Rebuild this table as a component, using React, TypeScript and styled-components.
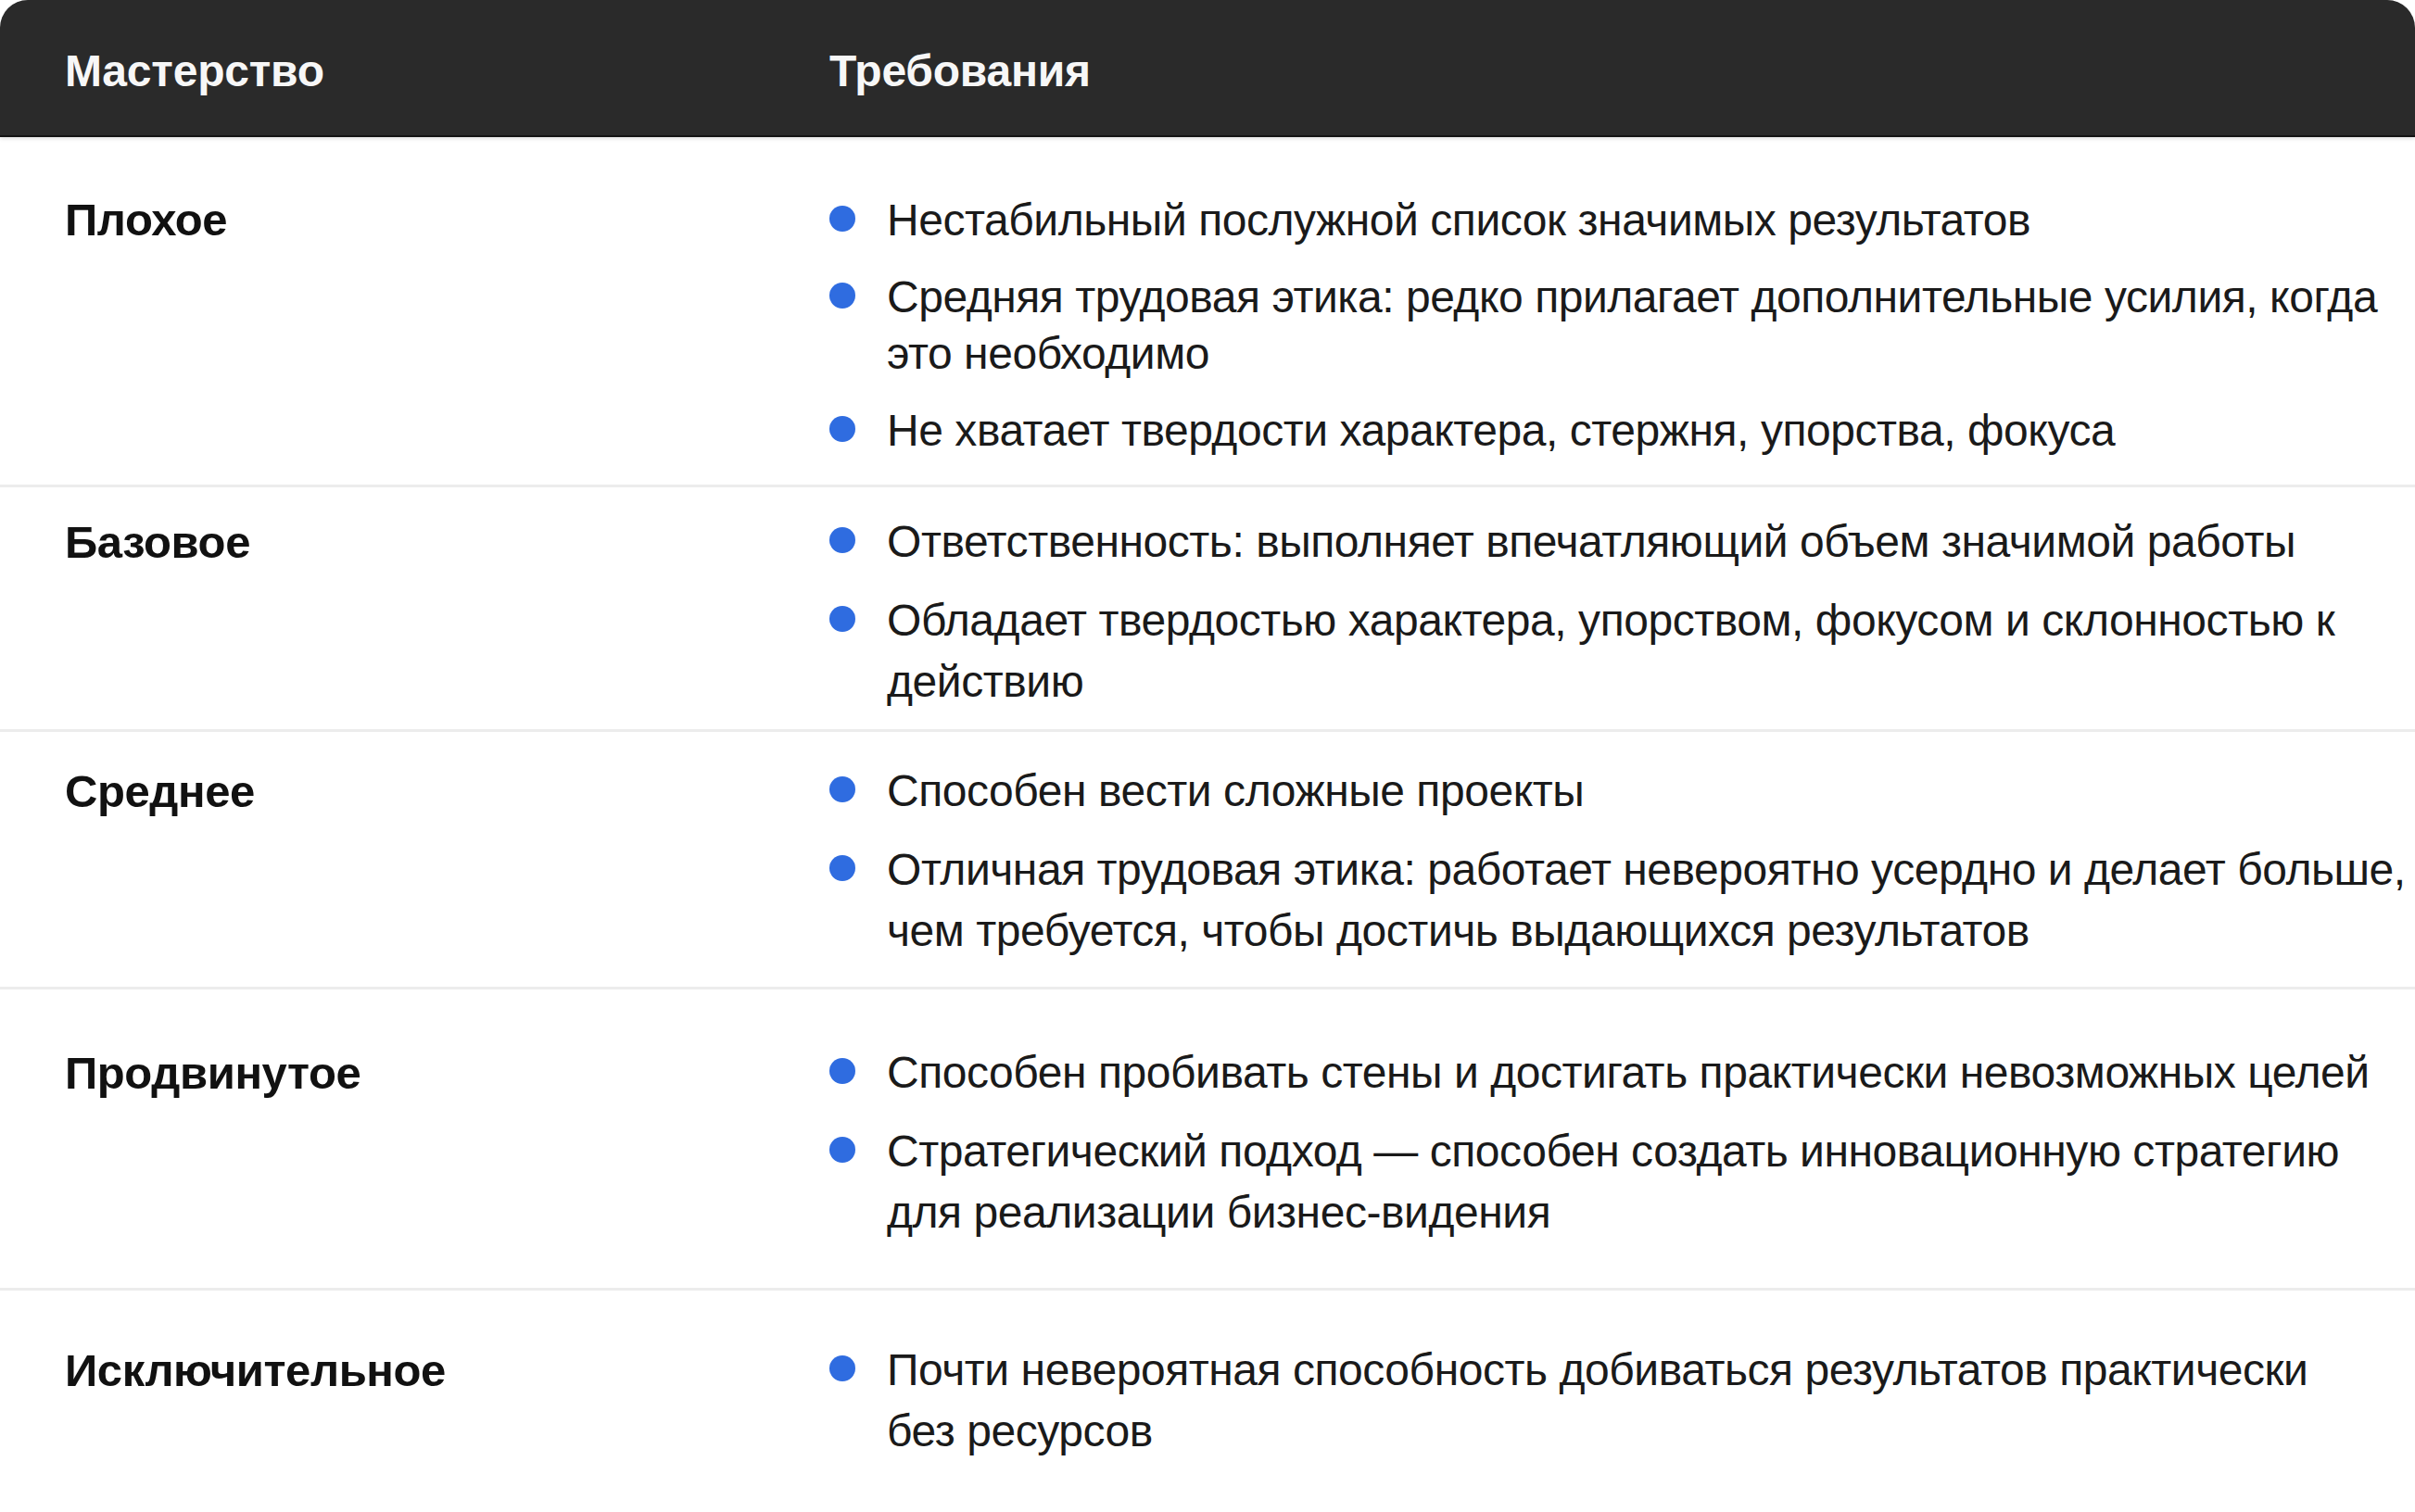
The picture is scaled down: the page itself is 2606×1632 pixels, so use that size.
import React from 'react';
import styled, { createGlobalStyle } from 'styled-components';

const GlobalStyle = createGlobalStyle`
  html, body {
    margin: 0;
    padding: 0;
    background: #ffffff;
  }
  body {
    font-family: "Liberation Sans", Arial, "Noto Sans", sans-serif;
    color: #1a1a1a;
  }
`;

const Card = styled.div`
  width: 2606px;
  min-height: 1632px;
  background: #ffffff;
  border-radius: 30px 30px 0 0;
  overflow: hidden;
`;

const HeaderRow = styled.div`
  display: grid;
  grid-template-columns: 825px 1fr;
  align-items: center;
  height: 148px;
  padding: 6px 0 0 70px;
  box-sizing: border-box;
  background: #2a2a2a;
  border-bottom: 2px solid #141414;
  box-shadow: 0 2px 4px rgba(0, 0, 0, 0.12);
  position: relative;
  z-index: 1;
`;

const HeaderCell = styled.div`
  color: #f7f7f7;
  font-size: 48px;
  font-weight: 700;
  letter-spacing: -0.2px;
`;

const Row = styled.div<{ $pt: number; $pb: number; $last?: boolean }>`
  display: grid;
  grid-template-columns: 825px 1fr;
  padding: ${p => p.$pt}px 10px ${p => p.$pb}px 70px;
  border-bottom: ${p => (p.$last ? 'none' : '3px solid #ececec')};
`;

const LevelName = styled.div<{ $lh: number }>`
  font-size: 49px;
  font-weight: 700;
  letter-spacing: -0.4px;
  color: #111111;
  line-height: ${p => p.$lh}px;
`;

const List = styled.ul<{ $lh: number; $gap: number }>`
  list-style: none;
  margin: 0;
  padding: 0;
  display: flex;
  flex-direction: column;
  gap: ${p => p.$gap}px;
  font-size: 48px;
  letter-spacing: -0.45px;
  line-height: ${p => p.$lh}px;
`;

const Item = styled.li`
  display: flex;
  align-items: flex-start;
`;

const Dot = styled.span<{ $lh: number }>`
  flex: none;
  width: 28px;
  height: 28px;
  border-radius: 50%;
  background: #2f6ce0;
  margin-top: ${p => (p.$lh - 28) / 2 - 2}px;
  margin-right: 34px;
`;

const ItemText = styled.span`
  color: #1a1a1a;
  white-space: pre-line;
`;

type Level = {
  name: string;
  items: string[];
  pt: number;
  pb: number;
  lh: number;
  gap: number;
};

const levels: Level[] = [
  {
    name: 'Плохое',
    pt: 59,
    pb: 28,
    lh: 61,
    gap: 22,
    items: [
      'Нестабильный послужной список значимых результатов',
      'Средняя трудовая этика: редко прилагает дополнительные усилия, когда\nэто необходимо',
      'Не хватает твердости характера, стержня, упорства, фокуса',
    ],
  },
  {
    name: 'Базовое',
    pt: 26,
    pb: 18,
    lh: 66,
    gap: 19,
    items: [
      'Ответственность: выполняет впечатляющий объем значимой работы',
      'Обладает твердостью характера, упорством, фокусом и склонностью к\nдействию',
    ],
  },
  {
    name: 'Среднее',
    pt: 31,
    pb: 27,
    lh: 66,
    gap: 19,
    items: [
      'Способен вести сложные проекты',
      'Отличная трудовая этика: работает невероятно усердно и делает больше,\nчем требуется, чтобы достичь выдающихся результатов',
    ],
  },
  {
    name: 'Продвинутое',
    pt: 57,
    pb: 48,
    lh: 66,
    gap: 19,
    items: [
      'Способен пробивать стены и достигать практически невозможных целей',
      'Стратегический подход — способен создать инновационную стратегию\nдля реализации бизнес-видения',
    ],
  },
  {
    name: 'Исключительное',
    pt: 53,
    pb: 54,
    lh: 66,
    gap: 19,
    items: [
      'Почти невероятная способность добиваться результатов практически\nбез ресурсов',
    ],
  },
];

const App: React.FC = () => {
  return (
    <>
      <GlobalStyle />
      <Card>
        <HeaderRow>
          <HeaderCell>Мастерство</HeaderCell>
          <HeaderCell>Требования</HeaderCell>
        </HeaderRow>
        {levels.map((lvl, i) => (
          <Row key={lvl.name} $pt={lvl.pt} $pb={lvl.pb} $last={i === levels.length - 1}>
            <LevelName $lh={lvl.lh}>{lvl.name}</LevelName>
            <List $lh={lvl.lh} $gap={lvl.gap}>
              {lvl.items.map(text => (
                <Item key={text}>
                  <Dot $lh={lvl.lh} />
                  <ItemText>{text}</ItemText>
                </Item>
              ))}
            </List>
          </Row>
        ))}
      </Card>
    </>
  );
};

export default App;
